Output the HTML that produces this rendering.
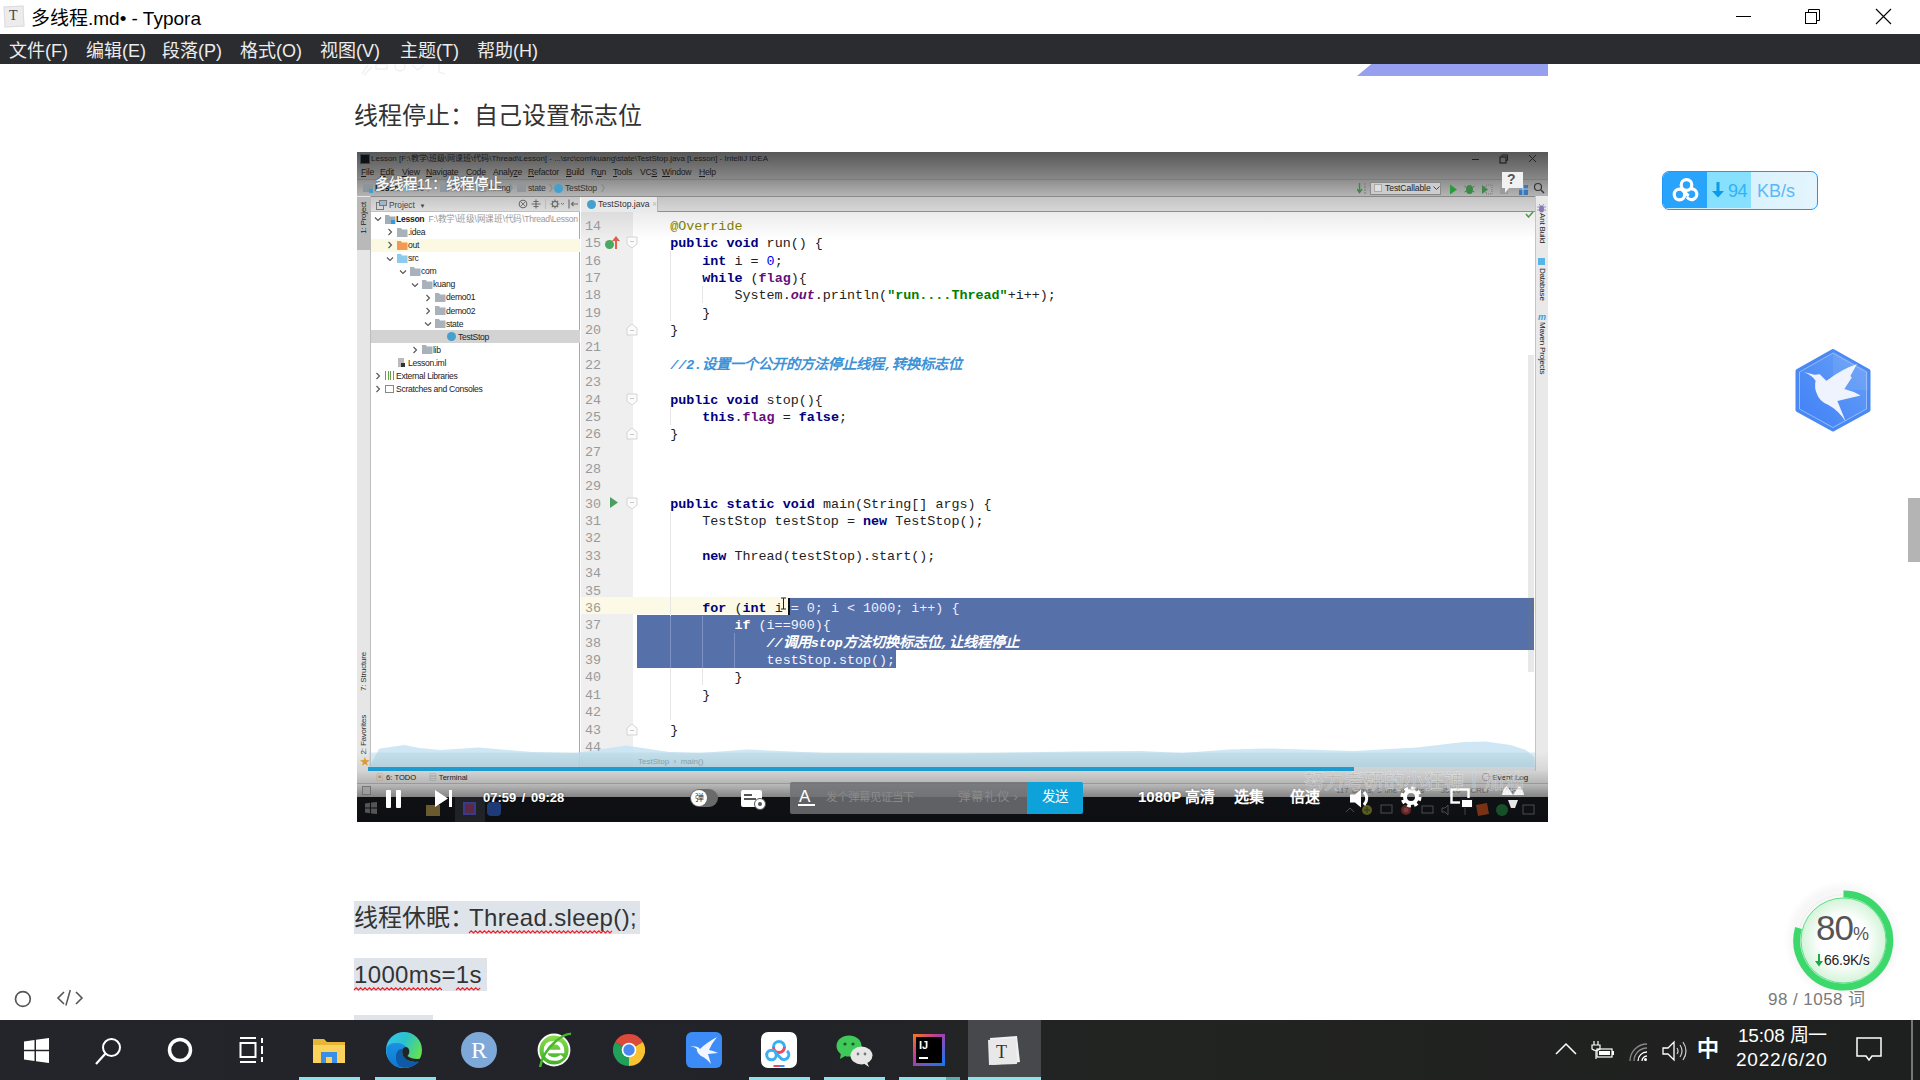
<!DOCTYPE html>
<html lang="zh-CN"><head><meta charset="utf-8">
<style>
*{margin:0;padding:0;box-sizing:border-box}
html,body{width:1920px;height:1080px;overflow:hidden;background:#fff;font-family:"Liberation Sans",sans-serif}
.a{position:absolute;white-space:nowrap}
#titlebar{left:0;top:0;width:1920px;height:34px;background:#fff}
#menubar{left:0;top:34px;width:1920px;height:30px;background:#2b2c2f}
.mi{position:absolute;top:38.5px;font-size:18px;line-height:24px;color:#ececec}
.p{color:#333;font-size:24px;line-height:32px}
.hl{background:#dfe4eb}
#video{left:357px;top:152px;width:1191px;height:670px;background:#fff;overflow:hidden}
#taskbar{left:0;top:1020px;width:1920px;height:60px;background:linear-gradient(90deg,#23252b,#212329 40%,#222421 60%,#1e1f1f)}
.ul{position:absolute;top:57px;height:3px;background:#8ee0ea}
.ide{font-family:"Liberation Sans",sans-serif}
.tree{font-size:8.6px;color:#222;line-height:11px;letter-spacing:-0.3px}
.tree .a{line-height:11px}
.fi{width:10px;height:8px;background:#b0b8c0}
.ar{font-size:11px}
.ln{left:228px;font-family:"Liberation Mono",monospace;font-size:13.4px;line-height:17.37px;color:#999}
.code{left:281px;font-family:"Liberation Mono",monospace;font-size:13.4px;line-height:17.37px;color:#222;white-space:pre}
.k{color:#000080;font-weight:bold}
.ks{color:#fff;font-weight:bold}
.f{color:#660e7a;font-weight:bold}
.n{color:#0000ff}
.s{color:#008000;font-weight:bold}
.so{color:#660e7a;font-weight:bold;font-style:italic}
.an{color:#808000}
.c{color:#3d92d6;font-style:italic;font-weight:bold}
.cj{font-size:14.3px;font-weight:bold}
.sel1{color:#eef}
.wsel{color:#f4f4ff}
.cs{color:#fff}
.imenu{top:15px;font-size:8.6px;line-height:11px;color:#1a1a1a;letter-spacing:-0.2px}
.bc{top:31px;font-size:8.6px;line-height:11px;color:#333;letter-spacing:-0.2px}
.vt{writing-mode:vertical-rl;transform:rotate(180deg);font-size:8px;line-height:10px;letter-spacing:-0.2px}
.vr{writing-mode:vertical-rl;font-size:8px;line-height:10px;color:#222;letter-spacing:-0.2px}
</style></head><body>
<div id="titlebar" class="a"></div>
<div class="a" style="left:4px;top:6px;width:20px;height:21px;background:#ececec;border:1px solid #dcdcdc;transform:rotate(-3deg)"></div>
<div class="a" style="left:9px;top:8px;font-family:'Liberation Serif',serif;font-size:14px;color:#444">T</div>
<div class="a" style="left:31px;top:6px;font-size:19px;line-height:26px;color:#000">多线程.md• - Typora</div>
<div class="a" style="left:1736px;top:16px;width:15px;height:1px;background:#000"></div>
<svg class="a" style="left:1804px;top:8px" width="18" height="18"><path d="M4.5 4.5V1.5H15.5V12.5H12.5" fill="none" stroke="#000" stroke-width="1"/><rect x="1.5" y="4.5" width="11" height="11" fill="#fff" stroke="#000" stroke-width="1"/></svg>

<svg class="a" style="left:1875px;top:8px" width="17" height="17"><path d="M1 1L16 16M16 1L1 16" stroke="#000" stroke-width="1.1"/></svg>

<div id="menubar" class="a"></div>
<div class="mi" style="left:9px">文件(F)</div>
<div class="mi" style="left:86px">编辑(E)</div>
<div class="mi" style="left:162px">段落(P)</div>
<div class="mi" style="left:240px">格式(O)</div>
<div class="mi" style="left:320px">视图(V)</div>
<div class="mi" style="left:400px">主题(T)</div>
<div class="mi" style="left:477px">帮助(H)</div>

<!-- top partial image -->
<svg class="a" style="left:360px;top:64px" width="95" height="12"><g fill="none" stroke="#efefef" stroke-width="1.3"><path d="M2 10L8 1M4 11L12 3"/><rect x="16" y="0" width="11" height="5"/><circle cx="40" cy="2" r="5"/><path d="M52 1L58 6L64 1"/><path d="M79 0V8L85 10"/></g></svg>
<div class="a" style="left:1357px;top:64px;width:191px;height:12px;background:#97a0ee;clip-path:polygon(7.5% 0,100% 0,100% 100%,0 100%)"></div>

<div class="a p" style="left:354px;top:99.5px">线程停止：自己设置标志位</div>

<div id="video" class="a">
<!-- IDE title bar -->
<div class="a" style="left:0;top:0;width:1191px;height:27px;background:linear-gradient(#575757,#888888)"></div>
<div class="a" style="left:3px;top:2px;width:10px;height:10px;background:#111;border:1px solid #345"></div>
<div class="a ide" style="left:14px;top:2px;font-size:8px;line-height:10px;color:#1a1a1a">Lesson [F:\教学\班级\网课班\代码\Thread\Lesson] - ...\src\com\kuang\state\TestStop.java [Lesson] - IntelliJ IDEA</div>
<div class="a" style="left:1115px;top:7px;width:7px;height:1px;background:#222"></div>
<svg class="a" style="left:1142px;top:2px" width="10" height="10"><path d="M3 2.5V1H8.5V6.5H7" fill="none" stroke="#222"/><rect x="1" y="3" width="6" height="6" fill="none" stroke="#222" stroke-width="1.2"/></svg>
<svg class="a" style="left:1171px;top:2px" width="9" height="9"><path d="M1 1L8 8M8 1L1 8" stroke="#222" stroke-width="1"/></svg>
<div class="a ide imenu" style="left:4px"><u>F</u>ile</div><div class="a ide imenu" style="left:23px"><u>E</u>dit</div><div class="a ide imenu" style="left:45px"><u>V</u>iew</div><div class="a ide imenu" style="left:69px"><u>N</u>avigate</div><div class="a ide imenu" style="left:109px"><u>C</u>ode</div><div class="a ide imenu" style="left:136px">Analy<u>z</u>e</div><div class="a ide imenu" style="left:171px"><u>R</u>efactor</div><div class="a ide imenu" style="left:209px"><u>B</u>uild</div><div class="a ide imenu" style="left:234px">R<u>u</u>n</div><div class="a ide imenu" style="left:256px"><u>T</u>ools</div><div class="a ide imenu" style="left:283px">VC<u>S</u></div><div class="a ide imenu" style="left:305px"><u>W</u>indow</div><div class="a ide imenu" style="left:342px"><u>H</u>elp</div>
<!-- breadcrumb toolbar -->
<div class="a" style="left:0;top:27px;width:1191px;height:18px;background:linear-gradient(#8e8e8e,#b4b4b4);border-top:1px solid #7c7c7c;border-bottom:1px solid #8a8a8a"></div>
<div class="a" style="left:6px;top:32px;width:10px;height:8px;background:#8c959c"></div><div class="a" style="left:12px;top:37px;width:4px;height:4px;background:#3aa0d0"></div>
<div class="a ide bc" style="left:18px;font-weight:bold;color:#111">Lesson</div><div class="a ide bc" style="left:46px;color:#777">〉</div>
<div class="a" style="left:44px;top:32px;width:9px;height:8px;background:#7fb6d6"></div><div class="a ide bc" style="left:56px">src</div><div class="a ide bc" style="left:70px;color:#777">〉</div>
<div class="a" style="left:83px;top:32px;width:9px;height:8px;background:#8f969c"></div><div class="a ide bc" style="left:94px">com</div><div class="a ide bc" style="left:113px;color:#777">〉</div>
<div class="a" style="left:121px;top:32px;width:9px;height:8px;background:#8f969c"></div><div class="a ide bc" style="left:131px">kuang</div><div class="a ide bc" style="left:152px;color:#777">〉</div>
<div class="a" style="left:160px;top:32px;width:9px;height:8px;background:#8f969c"></div><div class="a ide bc" style="left:171px">state</div><div class="a ide bc" style="left:192px;color:#777">〉</div>
<div class="a" style="left:197px;top:32px;width:9px;height:9px;border-radius:50%;background:#46a0cc"></div><div class="a ide bc" style="left:208px">TestStop</div><div class="a ide bc" style="left:244px;color:#777">〉</div>
<div class="a" style="left:18px;top:22px;font-size:14.5px;line-height:20px;color:#fff;-webkit-text-stroke:0.35px #fff;text-shadow:0 0 2px #444,0 0 1px #222;letter-spacing:0px">多线程11：线程停止</div>
<!-- right toolbar -->
<svg class="a" style="left:1000px;top:31px" width="10" height="12"><path d="M2.5 0V8M0 6L2.5 9.5L5 6" stroke="#3a8a3a" stroke-width="1.4" fill="none"/><path d="M7 1H9M7 4H9M7 7H9M7 10H9" stroke="#777"/></svg>
<div class="a" style="left:1013px;top:29.5px;width:71px;height:13px;border:1px solid #8a8a8a;background:#cdcdcd"></div><div class="a" style="left:1017px;top:32px;width:8px;height:8px;background:#e0e0e0;border:1px solid #aaa"></div>
<div class="a ide" style="left:1028px;top:31px;font-size:8.6px;line-height:10px;color:#222;letter-spacing:-0.1px">TestCallable</div><svg class="a" style="left:1076px;top:34px" width="7" height="5"><path d="M.5 .5L3.5 3.5L6.5 .5" stroke="#444" fill="none"/></svg>
<svg class="a" style="left:1092px;top:31px" width="80" height="13"><path d="M1 1.5L8 6.5L1 11.5Z" fill="#2a9a3a"/><ellipse cx="20.5" cy="6.5" rx="3.5" ry="4.5" fill="#3a8a46"/><path d="M15.5 3L17.5 4.5M15.5 9L17.5 8M25.5 3L23.5 4.5M25.5 9L23.5 8" stroke="#3a8a46"/><path d="M33 2L39 6.5L33 11Z" fill="#3a8a46"/><rect x="37" y="2" width="6" height="9" fill="none" stroke="#777" stroke-dasharray="1 1"/><rect x="51" y="3" width="8" height="8" fill="#9a9a9a"/><rect x="70" y="2" width="9" height="10" fill="#3a78b8"/><path d="M70 6H79M74 2V12" stroke="#cfe0f0" stroke-width=".8"/></svg>
<svg class="a" style="left:1144px;top:19px" width="24" height="23"><path d="M1 1H22V17H8L4 22V17H1Z" fill="#f1f1f1"/></svg>
<div class="a" style="left:1150px;top:19px;font-size:14px;line-height:17px;font-weight:bold;color:#555">?</div>
<svg class="a" style="left:1176px;top:30px" width="12" height="12"><circle cx="5" cy="5" r="3.5" stroke="#333" fill="none" stroke-width="1.2"/><path d="M8 8L11 11" stroke="#333" stroke-width="1.4"/></svg>
<!-- left tool strip -->
<div class="a" style="left:0;top:44px;width:14px;height:575px;background:#e6e6e6;border-right:1px solid #bdbdbd"></div>
<div class="a" style="left:0;top:45px;width:14px;height:53px;background:#b9b9b9"></div>
<div class="a ide vt" style="left:2px;top:50px;color:#222">1: Project</div>
<div class="a ide vt" style="left:2px;top:500px;color:#333">7: Structure</div>
<div class="a ide vt" style="left:2px;top:563px;color:#333">2: Favorites</div>
<div class="a" style="left:3px;top:601px;font-size:10px;color:#e8a030">★</div>
<!-- project panel -->
<div class="a" style="left:14px;top:45px;width:209px;height:570px;background:#fff;border-right:1px solid #a8a8a8"></div>
<div class="a" style="left:14px;top:45px;width:209px;height:15px;background:linear-gradient(#c6c6c6,#dcdcdc);border-bottom:1px solid #c0c0c0"></div>
<div class="a ide" style="left:32px;top:47.5px;font-size:8.3px;line-height:10px;color:#444">Project &nbsp;<span style="font-size:6px">▼</span></div>
<svg class="a" style="left:19px;top:48px" width="11" height="10"><rect x=".5" y="2.5" width="7" height="7" fill="none" stroke="#777"/><rect x="3.5" y=".5" width="7" height="5" fill="#9ab8d0" stroke="#777"/></svg>
<svg class="a" style="left:160px;top:46px" width="62" height="12"><g stroke="#6a6a6a" fill="none" stroke-width="1.1"><circle cx="6" cy="6" r="3.8"/><path d="M3.5 3.5L8.5 8.5M8.5 3.5L3.5 8.5" stroke-width=".9"/><path d="M19 1.5V10.5M14.5 6H23.5M16.5 3.5H21.5M16.5 8.5H21.5"/><path d="M28.5 1V11" stroke="#bbb"/><circle cx="38" cy="6" r="2.6"/><path d="M38 1.5V3M38 9V10.5M33.5 6H35M41 6H42.5M34.8 2.8L35.8 3.8M40.2 8.2L41.2 9.2M41.2 2.8L40.2 3.8M35.8 8.2L34.8 9.2"/><path d="M44 5L45.5 6.5L47 5" stroke-width=".9"/><path d="M52 1.5V10.5M54.5 6H61M56.5 4L54.5 6L56.5 8"/></g></svg>
<div class="a" style="left:14px;top:87px;width:209px;height:13px;background:#fbf9e2"></div>
<div class="a" style="left:14px;top:178px;width:209px;height:13px;background:#d3d3d3"></div>
<div class="tree ide">
<svg class="a" style="left:17px;top:64.3px" width="8" height="6"><path d="M1 1.5L4 4.5L7 1.5" fill="none" stroke="#555" stroke-width="1.1"/></svg>
<svg class="a" style="left:28px;top:62.8px" width="11" height="9"><path d="M0 0H4L5 1.5H10.5V9H0Z" fill="#a3adb5"/><rect x="6" y="5" width="4" height="4" fill="#2a9ee0"/></svg>
<div class="a" style="left:39px;top:62.1px"><b>Lesson</b> &nbsp;<span style="color:#999">F:\教学\班级\网课班\代码\Thread\Lesson</span></div>
<svg class="a" style="left:30px;top:76.4px" width="6" height="8"><path d="M1.5 1L4.5 4L1.5 7" fill="none" stroke="#555" stroke-width="1.1"/></svg>
<svg class="a" style="left:40px;top:75.9px" width="11" height="9"><path d="M0 0H4L5 1.5H10.5V9H0Z" fill="#a9b2ba"/></svg>
<div class="a" style="left:51px;top:75.2px">.idea</div>
<svg class="a" style="left:30px;top:89.4px" width="6" height="8"><path d="M1.5 1L4.5 4L1.5 7" fill="none" stroke="#555" stroke-width="1.1"/></svg>
<svg class="a" style="left:40px;top:88.9px" width="11" height="9"><path d="M0 0H4L5 1.5H10.5V9H0Z" fill="#f39a50"/></svg>
<div class="a" style="left:51px;top:88.2px">out</div>
<svg class="a" style="left:29px;top:103.5px" width="8" height="6"><path d="M1 1.5L4 4.5L7 1.5" fill="none" stroke="#555" stroke-width="1.1"/></svg>
<svg class="a" style="left:40px;top:102.0px" width="11" height="9"><path d="M0 0H4L5 1.5H10.5V9H0Z" fill="#8ccbeb"/></svg>
<div class="a" style="left:51px;top:101.3px">src</div>
<svg class="a" style="left:42px;top:116.5px" width="8" height="6"><path d="M1 1.5L4 4.5L7 1.5" fill="none" stroke="#555" stroke-width="1.1"/></svg>
<svg class="a" style="left:53px;top:115.0px" width="11" height="9"><path d="M0 0H4L5 1.5H10.5V9H0Z" fill="#a9b2ba"/></svg>
<div class="a" style="left:64px;top:114.3px">com</div>
<svg class="a" style="left:54px;top:129.6px" width="8" height="6"><path d="M1 1.5L4 4.5L7 1.5" fill="none" stroke="#555" stroke-width="1.1"/></svg>
<svg class="a" style="left:65px;top:128.1px" width="11" height="9"><path d="M0 0H4L5 1.5H10.5V9H0Z" fill="#a9b2ba"/></svg>
<div class="a" style="left:76px;top:127.4px">kuang</div>
<svg class="a" style="left:68px;top:141.6px" width="6" height="8"><path d="M1.5 1L4.5 4L1.5 7" fill="none" stroke="#555" stroke-width="1.1"/></svg>
<svg class="a" style="left:78px;top:141.1px" width="11" height="9"><path d="M0 0H4L5 1.5H10.5V9H0Z" fill="#a9b2ba"/></svg>
<div class="a" style="left:89px;top:140.4px">demo01</div>
<svg class="a" style="left:68px;top:154.7px" width="6" height="8"><path d="M1.5 1L4.5 4L1.5 7" fill="none" stroke="#555" stroke-width="1.1"/></svg>
<svg class="a" style="left:78px;top:154.2px" width="11" height="9"><path d="M0 0H4L5 1.5H10.5V9H0Z" fill="#a9b2ba"/></svg>
<div class="a" style="left:89px;top:153.5px">demo02</div>
<svg class="a" style="left:67px;top:168.7px" width="8" height="6"><path d="M1 1.5L4 4.5L7 1.5" fill="none" stroke="#555" stroke-width="1.1"/></svg>
<svg class="a" style="left:78px;top:167.2px" width="11" height="9"><path d="M0 0H4L5 1.5H10.5V9H0Z" fill="#a9b2ba"/></svg>
<div class="a" style="left:89px;top:166.5px">state</div>
<div class="a" style="left:90px;top:180.2px;width:9px;height:9px;border-radius:50%;background:#46a0cc"></div>
<div class="a" style="left:101px;top:179.6px">TestStop</div>
<svg class="a" style="left:55px;top:193.8px" width="6" height="8"><path d="M1.5 1L4.5 4L1.5 7" fill="none" stroke="#555" stroke-width="1.1"/></svg>
<svg class="a" style="left:65px;top:193.3px" width="11" height="9"><path d="M0 0H4L5 1.5H10.5V9H0Z" fill="#a9b2ba"/></svg>
<div class="a" style="left:76px;top:192.6px">lib</div>
<div class="a" style="left:41px;top:205.9px;width:6px;height:9px;background:#bbb"></div><div class="a" style="left:44px;top:210.9px;width:4px;height:4px;background:#333"></div>
<div class="a" style="left:51px;top:205.7px">Lesson.iml</div>
<svg class="a" style="left:18px;top:219.9px" width="6" height="8"><path d="M1.5 1L4.5 4L1.5 7" fill="none" stroke="#555" stroke-width="1.1"/></svg>
<div class="a" style="left:28px;top:219.4px;width:10px;height:9px;background:repeating-linear-gradient(90deg,#6a9a4a 0 1px,transparent 1px 2.5px)"></div>
<div class="a" style="left:39px;top:218.7px">External Libraries</div>
<svg class="a" style="left:18px;top:233.0px" width="6" height="8"><path d="M1.5 1L4.5 4L1.5 7" fill="none" stroke="#555" stroke-width="1.1"/></svg>
<div class="a" style="left:28px;top:233.0px;width:9px;height:8px;border:1px solid #888"></div>
<div class="a" style="left:39px;top:231.8px">Scratches and Consoles</div>
</div>
<!-- editor -->
<div class="a" style="left:224px;top:45px;width:954px;height:15px;background:linear-gradient(#c4c4c4,#d6d6d6);border-bottom:1px solid #8e8e8e"></div>
<div class="a" style="left:224px;top:45px;width:77px;height:15px;background:#e9e9e9;border-right:1px solid #b8b8b8"></div>
<div class="a" style="left:230px;top:48px;width:9px;height:9px;border-radius:50%;background:#46a0cc"></div>
<div class="a ide" style="left:241px;top:47px;font-size:8.6px;color:#333">TestStop.java <span style="color:#bbb">×</span></div>
<div class="a" style="left:224px;top:60px;width:52px;height:555px;background:#efefef"></div>
<div class="a" style="left:276px;top:60px;width:902px;height:555px;background:#fff"></div>
<div class="a" style="left:224px;top:445px;width:954px;height:17px;background:#fcfae6"></div>
<div class="a" style="left:433px;top:446px;width:744px;height:17.4px;background:#5670a9"></div>
<div class="a" style="left:280px;top:463.4px;width:897px;height:34.8px;background:#5670a9"></div>
<div class="a" style="left:280px;top:498.2px;width:259px;height:17.4px;background:#5670a9"></div>

<div class="a" style="left:224px;top:60px;width:954px;height:28px;background:linear-gradient(rgba(0,0,0,.08),rgba(0,0,0,0))"></div>
<div class="a" style="left:248px;top:88px;width:9px;height:9px;border-radius:50%;background:#4aa860"></div>
<div class="a" style="left:258px;top:85px;width:1.5px;height:12px;background:#e0604a"></div><svg class="a" style="left:255px;top:84px" width="8" height="5"><path d="M0 5L4 0L8 5Z" fill="#e0604a"/></svg>
<svg class="a" style="left:252px;top:345px" width="10" height="11"><path d="M1 0L9 5.5L1 11Z" fill="#4aa060"/></svg>
<svg class="a" style="left:269px;top:84.2px" width="12" height="13"><path d="M1 1H11V8L6 12L1 8Z" fill="#fbfbfb" stroke="#d4d4d4"/><path d="M4 5.5H8" stroke="#c8c8c8"/></svg>
<svg class="a" style="left:269px;top:171.0px" width="12" height="13"><path d="M1 12H11V5L6 1L1 5Z" fill="#fbfbfb" stroke="#d4d4d4"/><path d="M4 7.5H8" stroke="#c8c8c8"/></svg>
<svg class="a" style="left:269px;top:240.5px" width="12" height="13"><path d="M1 1H11V8L6 12L1 8Z" fill="#fbfbfb" stroke="#d4d4d4"/><path d="M4 5.5H8" stroke="#c8c8c8"/></svg>
<svg class="a" style="left:269px;top:275.2px" width="12" height="13"><path d="M1 12H11V5L6 1L1 5Z" fill="#fbfbfb" stroke="#d4d4d4"/><path d="M4 7.5H8" stroke="#c8c8c8"/></svg>
<svg class="a" style="left:269px;top:344.7px" width="12" height="13"><path d="M1 1H11V8L6 12L1 8Z" fill="#fbfbfb" stroke="#d4d4d4"/><path d="M4 5.5H8" stroke="#c8c8c8"/></svg>
<svg class="a" style="left:269px;top:570.5px" width="12" height="13"><path d="M1 12H11V5L6 1L1 5Z" fill="#fbfbfb" stroke="#d4d4d4"/><path d="M4 7.5H8" stroke="#c8c8c8"/></svg>
<div class="a" style="left:313px;top:99.04px;width:1px;height:17.4px;background:#e6e6e6"></div><div class="a" style="left:313px;top:116.41px;width:1px;height:17.4px;background:#e6e6e6"></div><div class="a" style="left:313px;top:133.78px;width:1px;height:17.4px;background:#e6e6e6"></div><div class="a" style="left:313px;top:151.15px;width:1px;height:17.4px;background:#e6e6e6"></div><div class="a" style="left:313px;top:255.37px;width:1px;height:17.4px;background:#e6e6e6"></div><div class="a" style="left:313px;top:359.59px;width:1px;height:17.4px;background:#e6e6e6"></div><div class="a" style="left:313px;top:376.96px;width:1px;height:17.4px;background:#e6e6e6"></div><div class="a" style="left:313px;top:394.33px;width:1px;height:17.4px;background:#e6e6e6"></div><div class="a" style="left:313px;top:411.70px;width:1px;height:17.4px;background:#e6e6e6"></div><div class="a" style="left:313px;top:429.07px;width:1px;height:17.4px;background:#e6e6e6"></div><div class="a" style="left:313px;top:446.44px;width:1px;height:17.4px;background:#e6e6e6"></div><div class="a" style="left:313px;top:463.81px;width:1px;height:17.4px;background:#7d92c4"></div><div class="a" style="left:313px;top:481.18px;width:1px;height:17.4px;background:#7d92c4"></div><div class="a" style="left:313px;top:498.55px;width:1px;height:17.4px;background:#7d92c4"></div><div class="a" style="left:313px;top:515.92px;width:1px;height:17.4px;background:#e6e6e6"></div><div class="a" style="left:313px;top:533.29px;width:1px;height:17.4px;background:#e6e6e6"></div><div class="a" style="left:313px;top:550.66px;width:1px;height:17.4px;background:#e6e6e6"></div><div class="a" style="left:345px;top:133.78px;width:1px;height:17.4px;background:#e6e6e6"></div><div class="a" style="left:345px;top:463.81px;width:1px;height:17.4px;background:#7d92c4"></div><div class="a" style="left:345px;top:481.18px;width:1px;height:17.4px;background:#7d92c4"></div><div class="a" style="left:345px;top:498.55px;width:1px;height:17.4px;background:#7d92c4"></div><div class="a" style="left:345px;top:515.92px;width:1px;height:17.4px;background:#e6e6e6"></div><div class="a" style="left:377px;top:481.18px;width:1px;height:17.4px;background:#7d92c4"></div><div class="a" style="left:377px;top:498.55px;width:1px;height:17.4px;background:#7d92c4"></div>
<div class="a" style="left:431px;top:446px;width:1.5px;height:17px;background:#111"></div><svg class="a" style="left:423px;top:445px" width="7" height="13"><path d="M1 1H6M3.5 1V12M1 12H6" stroke="#222" stroke-width="1" fill="none"/></svg>
<!-- right strip -->
<div class="a" style="left:1178px;top:44px;width:13px;height:575px;background:#e9e9e9;border-left:1px solid #c4c4c4"></div>
<div class="a ide vr" style="left:1180px;top:61px">Ant Build</div><svg class="a" style="left:1180px;top:52px" width="9" height="9"><ellipse cx="4.5" cy="5" rx="2.5" ry="3.5" fill="#8a7ab8"/><path d="M0 3H9M0 6H9M2 0L3.5 2M7 0L5.5 2" stroke="#8a7ab8" stroke-width=".8"/></svg>
<div class="a ide vr" style="left:1180px;top:116px">Database</div>
<div class="a ide vr" style="left:1180px;top:170px">Maven Projects</div>
<div class="a" style="left:1181px;top:106px;width:7px;height:7px;background:#5ab4e6"></div>
<div class="a" style="left:1181px;top:160px;font-size:9px;font-style:italic;color:#3aa0dc;font-weight:bold">m</div>
<svg class="a" style="left:1168px;top:59px" width="9" height="7"><path d="M1 3L3.5 6L8 1" stroke="#4a9a4a" stroke-width="1.5" fill="none"/></svg>
<!-- editor scrollbar -->
<div class="a" style="left:1171px;top:203px;width:6px;height:317px;background:rgba(120,120,120,.17)"></div>
<!-- wave -->
<svg class="a" style="left:0;top:586px" width="1191" height="30"><path d="M12.5 29.5 L22.0 10.8 L47.0 7.0 L62.5 10.0 L83.0 12.0 L122.0 9.5 L175.0 14.0 L219.0 15.0 L269.0 7.5 L312.5 14.0 L343.0 15.0 L390.6 11.5 L469.0 15.0 L600.0 15.5 L716.0 13.5 L784.8 13.0 L825.0 15.0 L872.0 11.5 L909.8 10.5 L997.0 13.0 L1059.8 9.5 L1106.6 4.0 L1128.5 3.5 L1153.5 7.0 L1169.0 12.0 L1177.0 19.0 L1178.0 29.5Z" fill="#c8e4f2" fill-opacity=".88"/><rect x="12" y="14.5" width="1166" height="15" fill="#b4d4e4" opacity=".45"/></svg>
<!-- status under editor -->
<div class="a ide" style="left:281px;top:605px;font-size:8px;color:#8aa">TestStop &nbsp;›&nbsp; main()</div>
<!-- progress -->
<div class="a" style="left:11px;top:615px;width:1167px;height:4px;background:#dde2e5"></div>
<div class="a" style="left:11px;top:615px;width:986px;height:4px;background:#1fa8e2"></div>
<!-- tool window bar -->
<div class="a" style="left:0;top:619px;width:1191px;height:13px;background:linear-gradient(#e6e6e6,#d2d2d2);border-bottom:1px solid #b0b0b0"></div>
<div class="a ide" style="left:19px;top:620px;font-size:7.6px;line-height:11px;color:#222"><span style="color:#c96">▣</span> 6: TODO &nbsp;&nbsp;&nbsp;&nbsp; <span style="color:#888">▤</span> Terminal</div>
<div class="a ide" style="left:1125px;top:620px;font-size:8px;line-height:11px;color:#222">◯ Event Log</div>
<!-- status bar & overlay gradient -->
<div class="a" style="left:0;top:632px;width:1191px;height:13px;background:linear-gradient(#d8d8d8,#a0a0a0)"></div>
<div class="a" style="left:5px;top:634px;width:9px;height:9px;background:#bbb;border:1px solid #888"></div>
<div class="a" style="left:0;top:645px;width:1191px;height:25px;background:#121418"></div>
<div class="a" style="left:0;top:600px;width:1191px;height:70px;background:linear-gradient(rgba(0,0,0,0),rgba(0,0,0,0.12) 40%,rgba(0,0,0,0.25))"></div>
<!-- recorded windows taskbar icons -->
<svg class="a" style="left:8px;top:650px" width="12" height="12"><path d="M0 1.5L5 .8V5.5H0ZM6 .6L12 0V5.5H6ZM0 6.5H5V11.2L0 10.5ZM6 6.5H12V12L6 11.4Z" fill="#555"/></svg>
<div class="a" style="left:69px;top:653px;width:14px;height:11px;background:#6a5a30"></div>
<div class="a" style="left:98px;top:645px;width:30px;height:25px;background:#1f2226"></div>
<div class="a" style="left:106px;top:650px;width:13px;height:13px;background:#5a2a44;border:2px solid #3a3a8a"></div>
<div class="a" style="left:130px;top:650px;width:14px;height:14px;border-radius:4px;background:#1e3a78"></div>
<div class="a ide" style="left:979px;top:633px;font-size:8px;line-height:11px;color:rgba(40,40,40,.5);word-spacing:1px">117 chars, 3 line breaks &nbsp;&nbsp;&nbsp; 35:20 &nbsp; CRLF &nbsp; UTF-8 &nbsp;</div>
<svg class="a" style="left:985px;top:651px" width="200" height="14"><g opacity=".6">
<path d="M4 9L8 5L12 9" stroke="#777" fill="none" stroke-width="1"/>
<circle cx="25" cy="7" r="5" fill="#9a8a20"/><path d="M22 7H28M25 4V10" stroke="#2a7a2a" stroke-width="1.5"/>
<rect x="39" y="2" width="11" height="8" fill="none" stroke="#777"/>
<circle cx="64" cy="7" r="5" fill="#a03030"/><circle cx="64" cy="7" r="2.5" fill="#c06060"/>
<rect x="80" y="3" width="11" height="7" fill="none" stroke="#777"/>
<path d="M100 5H103L106 2V12L103 9H100Z" fill="none" stroke="#777"/>
<path d="M118 3H128M123 3V12" stroke="#666"/>
<path d="M134 2L145 0L147 11L136 13Z" fill="#c04a18"/>
<circle cx="160" cy="7" r="6" fill="#1e7a3a"/>
<rect x="181" y="2" width="11" height="9" fill="none" stroke="#777"/>
</g></svg>
<!-- player controls -->
<div class="a" style="left:29px;top:638px;width:5px;height:18px;background:#fff;border-radius:1px"></div>
<div class="a" style="left:39px;top:638px;width:5px;height:18px;background:#fff;border-radius:1px"></div>
<svg class="a" style="left:78px;top:638px" width="18" height="17"><path d="M0 0L13 8.5L0 17Z" fill="#fff"/><rect x="14" y="0" width="3" height="17" fill="#fff"/></svg>
<div class="a" style="left:126px;top:637.5px;font-size:13px;font-weight:bold;color:#fff;word-spacing:2px;text-shadow:0 0 2px rgba(0,0,0,.5)">07:59 / 09:28</div>
<div class="a" style="left:333px;top:637px;width:28px;height:18px;border-radius:9px;background:#6a6a6a"></div>
<div class="a" style="left:334px;top:638px;width:16px;height:16px;border-radius:50%;background:#fff;font-size:9px;line-height:16px;text-align:center;color:#333">弹</div>
<svg class="a" style="left:384px;top:638px" width="26" height="20"><rect x="0" y="0" width="21" height="17" rx="2" fill="#fff"/><rect x="3" y="4" width="8" height="2" fill="#555"/><rect x="3" y="8" width="12" height="2" fill="#555"/><circle cx="19" cy="14" r="5.5" fill="#fff" stroke="#555" stroke-width="1"/><circle cx="19" cy="14" r="2" fill="#555"/></svg>
<div class="a" style="left:433px;top:630px;width:237px;height:32px;border-radius:2px 0 0 2px;background:rgba(110,112,115,0.85)"></div>
<div class="a" style="left:442px;top:635px;font-size:17px;line-height:19px;color:#fff">A</div><div class="a" style="left:441px;top:652px;width:17px;height:2px;background:#fff"></div>
<div class="a" style="left:469px;top:637px;font-size:11.5px;line-height:16px;color:#8a8a8a">发个弹幕见证当下</div>
<div class="a" style="left:601px;top:637px;font-size:12.5px;line-height:16px;color:#8a8a8a">弹幕礼仪 ›</div>
<div class="a" style="left:670px;top:630px;width:56px;height:32px;border-radius:0 2px 2px 0;background:#0da2da"></div>
<div class="a" style="left:685px;top:636px;font-size:13.5px;line-height:18px;color:#fff">发送</div>
<div class="a" style="left:781px;top:633px;font-size:15px;font-weight:bold;color:#fff;text-shadow:0 0 2px rgba(0,0,0,.4)">1080P 高清</div>
<div class="a" style="left:877px;top:633px;font-size:15px;font-weight:bold;color:#fff">选集</div>
<div class="a" style="left:933px;top:633px;font-size:15px;font-weight:bold;color:#fff">倍速</div>
<svg class="a" style="left:993px;top:636px" width="22" height="21"><path d="M0 6.5H5L11 1.5V19.5L5 14.5H0Z" fill="#fff"/><path d="M14 4Q19.5 10.5 14 17" stroke="#fff" stroke-width="3" fill="none"/></svg>
<svg class="a" style="left:1043px;top:634px" width="22" height="22"><circle cx="11" cy="11" r="6" fill="none" stroke="#fff" stroke-width="4"/><circle cx="11" cy="11" r="8.5" fill="none" stroke="#fff" stroke-width="4" stroke-dasharray="3.6 3.07"/></svg>
<svg class="a" style="left:1093px;top:636px" width="24" height="21"><rect x="1.5" y="1.5" width="17" height="13" stroke="#fff" stroke-width="2.4" fill="none"/><rect x="10" y="10" width="13" height="10" fill="#15171b"/><rect x="12" y="12" width="10" height="7" fill="#fff"/></svg>
<svg class="a" style="left:1143px;top:634px" width="26" height="24"><path d="M13 9L7 0Q3 2 2 9ZM13 9L19 0Q23 2 24 9ZM8 14L18 14L15 22L11 22Z" fill="#fff" opacity=".9"/></svg>
<div class="a" style="left:947px;top:618px;font-size:20px;line-height:24px;color:rgba(150,150,150,.45);-webkit-text-stroke:0.6px rgba(255,255,255,.5)">努力考研的小狂神丨加油</div>
<div class="a ln" style="top:65.80px">14</div>
<div class="a code" style="top:65.80px">    <span class="an">@Override</span></div>
<div class="a ln" style="top:83.17px">15</div>
<div class="a code" style="top:83.17px">    <span class="k">public</span> <span class="k">void</span> run() {</div>
<div class="a ln" style="top:100.54px">16</div>
<div class="a code" style="top:100.54px">        <span class="k">int</span> i = <span class="n">0</span>;</div>
<div class="a ln" style="top:117.91px">17</div>
<div class="a code" style="top:117.91px">        <span class="k">while</span> (<span class="f">flag</span>){</div>
<div class="a ln" style="top:135.28px">18</div>
<div class="a code" style="top:135.28px">            System.<span class="so">out</span>.println(<span class="s">"run....Thread"</span>+i++);</div>
<div class="a ln" style="top:152.65px">19</div>
<div class="a code" style="top:152.65px">        }</div>
<div class="a ln" style="top:170.02px">20</div>
<div class="a code" style="top:170.02px">    }</div>
<div class="a ln" style="top:187.39px">21</div>
<div class="a ln" style="top:204.76px">22</div>
<div class="a code" style="top:204.76px">    <span class="c">//2.<span class="cj">设置一个公开的方法停止线程</span>,<span class="cj">转换标志位</span></span></div>
<div class="a ln" style="top:222.13px">23</div>
<div class="a ln" style="top:239.50px">24</div>
<div class="a code" style="top:239.50px">    <span class="k">public</span> <span class="k">void</span> stop(){</div>
<div class="a ln" style="top:256.87px">25</div>
<div class="a code" style="top:256.87px">        <span class="k">this</span>.<span class="f">flag</span> = <span class="k">false</span>;</div>
<div class="a ln" style="top:274.24px">26</div>
<div class="a code" style="top:274.24px">    }</div>
<div class="a ln" style="top:291.61px">27</div>
<div class="a ln" style="top:308.98px">28</div>
<div class="a ln" style="top:326.35px">29</div>
<div class="a ln" style="top:343.72px">30</div>
<div class="a code" style="top:343.72px">    <span class="k">public</span> <span class="k">static</span> <span class="k">void</span> main(String[] args) {</div>
<div class="a ln" style="top:361.09px">31</div>
<div class="a code" style="top:361.09px">        TestStop testStop = <span class="k">new</span> TestStop();</div>
<div class="a ln" style="top:378.46px">32</div>
<div class="a ln" style="top:395.83px">33</div>
<div class="a code" style="top:395.83px">        <span class="k">new</span> Thread(testStop).start();</div>
<div class="a ln" style="top:413.20px">34</div>
<div class="a ln" style="top:430.57px">35</div>
<div class="a ln" style="top:447.94px">36</div>
<div class="a code" style="top:447.94px">        <span class="k">for</span> (<span class="k">int</span> i <span class="sel1">= 0; i &lt; 1000; i++) {</span></div>
<div class="a ln" style="top:465.31px">37</div>
<div class="a code wsel" style="top:465.31px">            <span class="ks">if</span> (i==900){</div>
<div class="a ln" style="top:482.68px">38</div>
<div class="a code wsel" style="top:482.68px">                <span class="c cs">//<span class="cj">调用</span>stop<span class="cj">方法切换标志位</span>,<span class="cj">让线程停止</span></span></div>
<div class="a ln" style="top:500.05px">39</div>
<div class="a code wsel" style="top:500.05px">                testStop.stop();</div>
<div class="a ln" style="top:517.42px">40</div>
<div class="a code" style="top:517.42px">            }</div>
<div class="a ln" style="top:534.79px">41</div>
<div class="a code" style="top:534.79px">        }</div>
<div class="a ln" style="top:552.16px">42</div>
<div class="a ln" style="top:569.53px">43</div>
<div class="a code" style="top:569.53px">    }</div>
<div class="a ln" style="top:586.90px">44</div>
</div>

<div class="a p hl" style="left:354px;top:901px;width:286px;height:33px"></div>
<div class="a p" style="left:354px;top:902px">线程休眠<span style="letter-spacing:-5px">：</span><span style="letter-spacing:0.35px">Thread.sleep();</span></div>
<div class="a p hl" style="left:354px;top:958px;width:133px;height:33px"></div>
<div class="a p" style="left:354px;top:959px;letter-spacing:0.35px">1000ms=1s</div>
<div class="a hl" style="left:354px;top:1015px;width:79px;height:5px"></div>
<svg class="a" style="left:0;top:0" width="1920" height="1080"><path d="M469.0 933.0 L471.2 930.8 L473.4 933.0 L475.6 930.8 L477.8 933.0 L480.0 930.8 L482.2 933.0 L484.4 930.8 L486.6 933.0 L488.8 930.8 L491.0 933.0 L493.2 930.8 L495.4 933.0 L497.6 930.8 L499.8 933.0 L502.0 930.8 L504.2 933.0 L506.4 930.8 L508.6 933.0 L510.8 930.8 L513.0 933.0 L515.2 930.8 L517.4 933.0 L519.6 930.8 L521.8 933.0 L524.0 930.8 L526.2 933.0 L528.4 930.8 L530.6 933.0 L532.8 930.8 L535.0 933.0 L537.2 930.8 L539.4 933.0 L541.6 930.8 L543.8 933.0 L546.0 930.8 L548.2 933.0 L550.4 930.8 L552.6 933.0 L554.8 930.8 L557.0 933.0 L559.2 930.8 L561.4 933.0 L563.6 930.8 L565.8 933.0 L568.0 930.8 L570.2 933.0 L572.4 930.8 L574.6 933.0 L576.8 930.8 L579.0 933.0 L581.2 930.8 L583.4 933.0 L585.6 930.8 L587.8 933.0 L590.0 930.8 L592.2 933.0 L594.4 930.8 L596.6 933.0 L598.8 930.8 L601.0 933.0 L603.2 930.8 L605.4 933.0 L607.6 930.8 L609.8 933.0 L612.0 930.8" fill="none" stroke="#ee1c22" stroke-width="1.1"/><path d="M354.0 990.0 L356.2 987.8 L358.4 990.0 L360.6 987.8 L362.8 990.0 L365.0 987.8 L367.2 990.0 L369.4 987.8 L371.6 990.0 L373.8 987.8 L376.0 990.0 L378.2 987.8 L380.4 990.0 L382.6 987.8 L384.8 990.0 L387.0 987.8 L389.2 990.0 L391.4 987.8 L393.6 990.0 L395.8 987.8 L398.0 990.0 L400.2 987.8 L402.4 990.0 L404.6 987.8 L406.8 990.0 L409.0 987.8 L411.2 990.0 L413.4 987.8 L415.6 990.0 L417.8 987.8 L420.0 990.0 L422.2 987.8 L424.4 990.0 L426.6 987.8 L428.8 990.0 L431.0 987.8 L433.2 990.0 L435.4 987.8 L437.6 990.0 L439.8 987.8 L442.0 990.0" fill="none" stroke="#ee1c22" stroke-width="1.1"/><path d="M456.0 990.0 L458.2 987.8 L460.4 990.0 L462.6 987.8 L464.8 990.0 L467.0 987.8 L469.2 990.0 L471.4 987.8 L473.6 990.0 L475.8 987.8 L478.0 990.0 L480.2 987.8" fill="none" stroke="#ee1c22" stroke-width="1.1"/></svg>


<svg class="a" style="left:10px;top:986px" width="26" height="26"><circle cx="12.9" cy="13" r="7.4" fill="none" stroke="#555" stroke-width="1.7"/></svg>
<svg class="a" style="left:50px;top:985px" width="36" height="26"><path d="M14 7L8 13L14 19M26 7L32 13L26 19" fill="none" stroke="#555" stroke-width="1.6"/><path d="M20.3 5L15.9 20.5" stroke="#555" stroke-width="1.5"/></svg>
<div class="a" style="left:1768px;top:985px;font-size:17px;color:#7a7a7a;letter-spacing:0.45px">98 / 1058 词</div>
<div class="a" style="left:1908px;top:498px;width:12px;height:64px;background:#b4b4b4"></div>


<!-- baidu badge -->
<div class="a" style="left:1662px;top:171px;width:156px;height:39px;border:1.5px solid #1e96f8;border-radius:7px;overflow:hidden;background:linear-gradient(100deg,#cdeefd,#e4f5fe)">
  <div class="a" style="left:0;top:0;width:44px;height:36px;background:#29a4fd"></div>
  <div class="a" style="left:44px;top:0;width:44px;height:36px;background:#87e0fe"></div>
  <svg class="a" style="left:7px;top:4px" width="32" height="30"><g fill="none" stroke="#fff" stroke-width="3.2"><circle cx="16.5" cy="9" r="5.3"/><circle cx="9.5" cy="18.5" r="5.3"/><path d="M17 21 A5.3 5.3 0 1 0 21 13"/><path d="M12.5 14 L18.5 20"/></g></svg>
  <svg class="a" style="left:48px;top:10px" width="14" height="16"><path d="M5.5 0H8.5V9H13L7 15.5L1 9H5.5Z" fill="#0b9be9"/></svg>
  <div class="a" style="left:65px;top:8px;font-size:18px;line-height:22px;color:#2fb3f7;letter-spacing:-0.5px">94</div>
  <div class="a" style="left:94px;top:8px;font-size:18px;line-height:22px;color:#5ab8f8">KB/s</div>
</div>
<!-- xunlei hexagon -->
<svg class="a" style="left:1790px;top:344px" width="86" height="92" viewBox="1790 344 86 92">
  <defs><linearGradient id="xg" x1="0" y1="1" x2="1" y2="0"><stop offset="0" stop-color="#3d7ff6"/><stop offset="1" stop-color="#6aa2f6"/></linearGradient></defs>
  <path d="M1833 351 L1868.5 371 L1868.5 410 L1833 429.5 L1797.5 410 L1797.5 371 Z" fill="url(#xg)" stroke="#4a88f4" stroke-width="4" stroke-linejoin="round"/><path d="M1833 351 L1868.5 371 L1868.5 390 L1833 390Z" fill="#fff" opacity=".08"/>
  <path d="M1833 353 L1866.5 372 L1866.5 409 L1833 427.5 L1799.5 409 L1799.5 372 Z" fill="none" stroke="#a8c8fb" stroke-width="0.8" stroke-linejoin="round"/>
  <path d="M1804 372 L1814.3 374.7 L1819.8 374.3 L1826.3 380.7 L1828 379.8 Q1842 369 1857 364 L1850.4 376.1 L1851.8 377.5 L1844.4 389 Q1853 391 1860.6 395.6 L1837.4 401.1 L1845.7 421.5 Q1838 410 1828 404.8 Q1819 401 1817 394 Q1814 388 1815.6 380.7 Q1813 376 1804 372Z" fill="#eef3fd"/>
</svg>
<!-- 360 ring -->
<div class="a" style="left:1783px;top:880px;width:120px;height:120px;border-radius:50%;background:radial-gradient(circle,rgba(0,0,0,0.03) 60%,rgba(0,0,0,0) 70%)"></div>
<svg class="a" style="left:1791px;top:888px" width="106" height="106" viewBox="0 0 106 106">
  <defs><radialGradient id="rg"><stop offset="0.55" stop-color="#fff"/><stop offset="1" stop-color="#d3f3d8"/></radialGradient></defs>
  <circle cx="52.5" cy="52.5" r="43" fill="url(#rg)"/>
  <circle cx="52.5" cy="52.5" r="46" fill="none" stroke="#eeeeee" stroke-width="1"/>
  <path d="M52.5 6 A46.5 46.5 0 1 1 7.5 40" fill="none" stroke="#3dd86c" stroke-width="7"/>
  <circle cx="52.5" cy="52.5" r="42.5" fill="none" stroke="#5fe08a" stroke-width="1"/>
</svg>
<div class="a" style="left:1816px;top:908px;font-size:35px;line-height:40px;color:#555;letter-spacing:-1px;font-weight:normal">80<span style="font-size:18px">%</span></div>
<svg class="a" style="left:1815px;top:954px" width="8" height="13"><path d="M3 0H5V7H8L4 12.5L0 7H3Z" fill="#1aaa48"/></svg><div class="a" style="left:1824px;top:951px;font-size:14px;line-height:18px;color:#222;letter-spacing:-0.3px">66.9K/s</div>
<div id="taskbar" class="a">
  <div class="ul" style="left:299px;width:61px"></div>
  <div class="ul" style="left:375px;width:61px"></div>
  <div class="ul" style="left:749px;width:61px"></div>
  <div class="ul" style="left:824px;width:61px"></div>
  <div class="ul" style="left:899px;width:47px"></div>
  <div class="ul" style="left:946px;width:14px;background:#5fa8b0"></div>
  <div class="a" style="left:968px;top:0;width:73px;height:60px;background:#46484c"></div>
  <div class="ul" style="left:968px;width:73px"></div>
  <svg class="a" style="left:24px;top:18px" width="25" height="25"><path d="M0 3.5L10.5 2V11.8H0ZM12 1.8L25 0V11.8H12ZM0 13.2H10.5V23L0 21.5ZM12 13.2H25V25L12 23.2Z" fill="#fff"/></svg>
  <svg class="a" style="left:94px;top:16px" width="30" height="30"><circle cx="17.5" cy="11.5" r="8.5" fill="none" stroke="#fff" stroke-width="2"/><path d="M11.5 17.5L2 28" stroke="#fff" stroke-width="2.2"/></svg>
  <svg class="a" style="left:167px;top:17px" width="26" height="26"><circle cx="13" cy="13" r="10.5" fill="none" stroke="#fff" stroke-width="3.5"/></svg>
  <svg class="a" style="left:239px;top:17px" width="26" height="26"><path d="M1 1H17M1 25H17" stroke="#fff" stroke-width="2"/><rect x="1.5" y="6" width="15" height="14" fill="none" stroke="#fff" stroke-width="2"/><path d="M23 1V6M23 9V17M23 20V25" stroke="#fff" stroke-width="2"/></svg>
  <svg class="a" style="left:312px;top:16px" width="34" height="30"><path d="M1 3H12L15 6H33V27H1Z" fill="#e6b638"/><path d="M1 9H33V27H1Z" fill="#fbd35c"/><path d="M9 16H25V27H20V21H14V27H9Z" fill="#3a8ee8"/></svg>
  <svg class="a" style="left:386px;top:12px" width="36" height="36" viewBox="0 0 36 36"><defs><linearGradient id="eg" x1="0" y1="0" x2="1" y2="0.55"><stop offset="0" stop-color="#38c4f4"/><stop offset=".5" stop-color="#2ac2cc"/><stop offset="1" stop-color="#66e24e"/></linearGradient><linearGradient id="eb" x1="0" y1="0" x2="0" y2="1"><stop offset="0" stop-color="#1b90e2"/><stop offset="1" stop-color="#0d78d6"/></linearGradient></defs>
<circle cx="18" cy="18" r="18" fill="url(#eg)"/>
<path d="M0.2 18 Q1 11 9.5 11 Q17 10.5 20.5 15.5 L16.5 17 Q12 17 10 22 Q9 31 16 36 Q2 35 0.2 18Z" fill="url(#eb)"/>
<path d="M10 22 Q12 16.5 16.5 17 Q15 23.5 20 27.5 Q26 31 33.5 29.5 Q28 36 18 36 Q11.5 35.5 10 28Z" fill="#0e5aa8"/>
<path d="M16.5 17 Q19.5 13.5 22.5 16.5 Q24.5 20.5 21.5 24 Q25.5 27.5 34.5 26.8 L33.5 29.5 Q26 31 20 27.5 Q15 23.5 16.5 17Z" fill="#222429"/>
</svg>
  <div class="a" style="left:461px;top:12px;width:36px;height:36px;border-radius:50%;background:#7ea8d8;color:#fff;font-family:'Liberation Serif',serif;font-size:24px;line-height:36px;text-align:center">R</div>
  <svg class="a" style="left:536px;top:10px" width="38" height="40" viewBox="0 0 38 40"><defs><linearGradient id="ieg" x1="0" y1="0" x2="0" y2="1"><stop offset="0" stop-color="#8ee04e"/><stop offset="1" stop-color="#3cae28"/></linearGradient></defs><circle cx="18" cy="20" r="15.5" fill="url(#ieg)" stroke="#fff" stroke-width="1.8"/><path d="M9.5 21.5H26.5Q26.5 12.5 18 12.5Q9.5 12.5 9.5 21Q9.5 29 18.5 29Q23.5 29 26 26" fill="none" stroke="#fff" stroke-width="3.6"/><path d="M4 37Q7 22 20 11Q30 3 35 4" fill="none" stroke="#46b82a" stroke-width="2.4"/></svg>
  <svg class="a" style="left:613px;top:14px" width="32" height="32" viewBox="0 0 32 32"><path d="M16 16L2.14 8A16 16 0 0 1 29.86 8Z" fill="#dc4a3c"/><path d="M16 16L29.86 8A16 16 0 0 1 16 32Z" fill="#f9c230"/><path d="M16 16L16 32A16 16 0 0 1 2.14 8Z" fill="#20a058"/><circle cx="16" cy="16" r="7.3" fill="#fff"/><circle cx="16" cy="16" r="5.7" fill="#4a88ee"/></svg>
  <div class="a" style="left:686px;top:12px;width:36px;height:36px;border-radius:6px;background:#3d8bf6"></div>
  <svg class="a" style="left:686px;top:12px" width="36" height="36" viewBox="0 0 36 36"><path d="M4 14 L9 14.5 Q12 14 14 17 Q20 11 31 5 L26 12 L23 18 Q28 19 32 21 L22 22 L25 32 Q20 26 15 24 Q10 20 11 17 Q9 15 4 14Z" fill="#f2f5fd"/></svg>
  <div class="a" style="left:761px;top:12px;width:36px;height:36px;border-radius:7px;background:#fff"></div>
  <svg class="a" style="left:761px;top:12px" width="36" height="36" viewBox="0 0 36 36"><g fill="none" stroke-width="3"><path d="M12.5 15A5.5 5.5 0 1 1 23.5 15" stroke="#3ab0f0"/><path d="M12.5 15A5.5 5.5 0 0 0 23.5 15" stroke="#ee4a68"/><circle cx="10.5" cy="23" r="4.8" stroke="#3ab0f0"/><path d="M14 20L20 26.5A4.8 4.8 0 1 0 26 19" stroke="#3ab0f0"/></g><rect x="12.5" y="33" width="5.5" height="2" fill="#e84b5e"/><rect x="18" y="33" width="5.5" height="2" fill="#3a90f0"/></svg>
  <svg class="a" style="left:836px;top:14px" width="38" height="34" viewBox="0 0 38 34"><ellipse cx="13" cy="12" rx="12.5" ry="10.5" fill="#3ec959"/><path d="M5 19 L4 25 L11 21Z" fill="#3ec959"/><circle cx="9" cy="10" r="1.6" fill="#1c5a2a"/><circle cx="17" cy="10" r="1.6" fill="#1c5a2a"/><ellipse cx="25.5" cy="21.5" rx="11" ry="9" fill="#e6e6e6"/><path d="M31 28 L33 33 L27 29Z" fill="#e6e6e6"/><circle cx="22" cy="20" r="1.4" fill="#777"/><circle cx="29" cy="20" r="1.4" fill="#777"/></svg>
  <svg class="a" style="left:913px;top:14px" width="32" height="32" viewBox="0 0 32 32"><defs><linearGradient id="ijg" x1="0" y1="0" x2="1" y2="1"><stop offset="0" stop-color="#f97a12"/><stop offset=".4" stop-color="#b83aa0"/><stop offset="1" stop-color="#087cfa"/></linearGradient></defs><rect x="0" y="0" width="32" height="32" fill="url(#ijg)"/><rect x="3" y="3" width="26" height="26" fill="#000"/><text x="6" y="15" font-family="Liberation Sans" font-weight="bold" font-size="11" fill="#fff">IJ</text><rect x="6" y="23" width="9" height="2" fill="#fff"/></svg>
  <svg class="a" style="left:986px;top:14px" width="36" height="34" viewBox="0 0 36 34"><path d="M4 4 L31 2 L34 28 L6 31Z" fill="#f1f1f1"/><path d="M2 6 L30 4 L31 30 L3 31Z" fill="#e8e8e8"/><text x="10" y="24" font-family="Liberation Serif" font-size="18" fill="#333">T</text></svg>
  <!-- tray -->
  <svg class="a" style="left:1555px;top:22px" width="22" height="14"><path d="M1 12L11 2L21 12" stroke="#fff" stroke-width="1.5" fill="none"/></svg>
  <svg class="a" style="left:1589px;top:20px" width="26" height="20"><path d="M5 1V5M9 1V5" stroke="#fff" stroke-width="1.2"/><path d="M3 5H11V9Q7 12 3 9Z" fill="none" stroke="#fff" stroke-width="1.2"/><path d="M7 11V19" stroke="#fff" stroke-width="1.2"/><rect x="8" y="9" width="15" height="8" fill="none" stroke="#fff" stroke-width="1.2"/><rect x="10" y="11" width="11" height="4" fill="#fff"/><rect x="23" y="11" width="2" height="4" fill="#fff"/></svg>
  <svg class="a" style="left:1628px;top:22px" width="22" height="20"><g fill="none" stroke="#888" stroke-width="1.3"><path d="M2 19 A17 17 0 0 1 19 2"/><path d="M6 19 A13 13 0 0 1 19 6"/></g><g fill="none" stroke="#fff" stroke-width="1.3"><path d="M10 19 A9 9 0 0 1 19 10"/><path d="M14 19 A5 5 0 0 1 19 14"/></g><circle cx="17.5" cy="17.5" r="1.5" fill="#fff"/></svg>
  <svg class="a" style="left:1662px;top:20px" width="26" height="22"><path d="M1 8H6L12 2V20L6 14H1Z" fill="none" stroke="#fff" stroke-width="1.3"/><path d="M15 8Q17 11 15 14M18 5Q22 11 18 17M21 2Q27 11 21 20" fill="none" stroke="#ccc" stroke-width="1.2"/></svg>
  <div class="a" style="left:1697px;top:15px;font-size:22px;line-height:28px;color:#fff;font-weight:bold">中</div>
  <div class="a" style="left:1738px;top:5px;font-size:19px;line-height:22px;color:#fff;letter-spacing:-0.2px">15:08 周一</div>
  <div class="a" style="left:1736px;top:29px;font-size:19px;line-height:22px;color:#fff;letter-spacing:0.8px">2022/6/20</div>
  <svg class="a" style="left:1856px;top:17px" width="26" height="26"><path d="M1 1H25V19H16L13 23L10 19H1Z" fill="none" stroke="#fff" stroke-width="1.5"/></svg>
  <div class="a" style="left:1911px;top:0;width:2px;height:60px;background:#777"></div>
</div>
</body></html>
